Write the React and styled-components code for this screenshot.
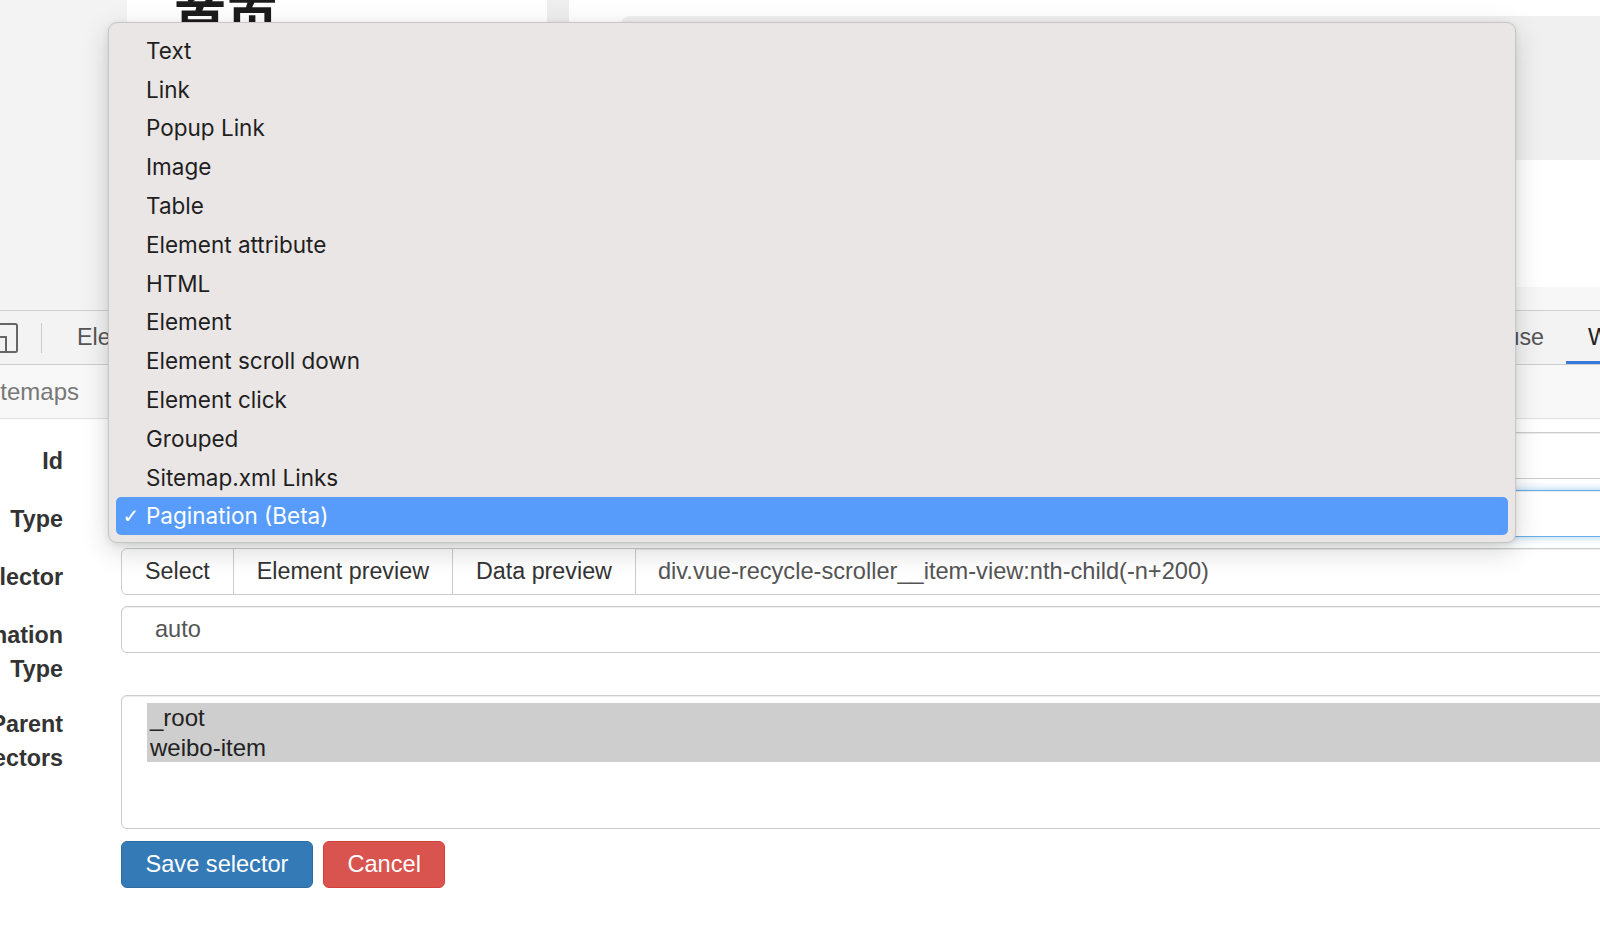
import React from 'react';
import styled, { createGlobalStyle } from 'styled-components';

const GlobalStyle = createGlobalStyle`
  html, body {
    margin: 0;
    padding: 0;
    width: 1600px;
    height: 937px;
    overflow: hidden;
    background: #fff;
  }
  body {
    font-family: "Liberation Sans", Arial, sans-serif;
    color: #333;
  }
  * { box-sizing: border-box; }
`;

const Screen = styled.div`
  position: relative;
  width: 1600px;
  height: 937px;
  overflow: hidden;
`;

/* ---- web page behind devtools ---- */
const Site = styled.div`
  display: flex;
  height: 310px;
  background: #f3f3f3;
`;

const SideGutter = styled.div`
  width: 127px;
  flex-shrink: 0;
`;

const FeedColumn = styled.div`
  width: 420px;
  flex-shrink: 0;
  background: #fff;
  overflow: hidden;
`;

const PageTitle = styled.h1`
  margin: -9px 0 0 47px;
  font: 700 52px/1 "Noto Sans CJK SC", sans-serif;
  color: #1c1c1c;
`;

const ColumnGap = styled.div`
  width: 22px;
  flex-shrink: 0;
  background: #eeeeee;
`;

const MainColumn = styled.div`
  flex: 1;
  display: flex;
  flex-direction: column;
  padding-top: 16px;
  background: #fff;
`;

const SearchCard = styled.div`
  margin-left: 51px;
  height: 144px;
  background: #f0f0f0;
  border-radius: 10px 0 0 10px;
`;

const MainFooter = styled.div`
  margin-top: auto;
  height: 23px;
  background: #f7f7f7;
`;

/* ---- devtools ---- */
const DevTools = styled.div`
  border-top: 1px solid #d0d0d0;
`;

const TabBar = styled.div`
  display: flex;
  align-items: center;
  height: 54px;
  background: #f3f3f3;
  border-bottom: 1px solid #cdcdcd;
  font-size: 23.3px;
  color: #555;
  white-space: nowrap;
  overflow: hidden;
`;

const Separator = styled.div`
  width: 1px;
  height: 30px;
  margin: 0 13px 0 23px;
  background: #cacaca;
`;

const Tab = styled.div`
  position: relative;
  flex-shrink: 0;
  height: 100%;
  display: flex;
  align-items: center;
  padding: 3px ${p => (p.$clip ? 0 : 22)}px 0 22px;
  overflow: hidden;
  width: ${p => (p.$clip ? `${p.$clip}px` : 'auto')};
  color: ${p => (p.$active ? '#222' : '#555')};
  border-bottom: 3px solid ${p => (p.$active ? '#3879d9' : 'transparent')};
`;

const TabSpacer = styled.div`
  flex: 1;
`;

const Breadcrumb = styled.nav`
  display: flex;
  align-items: center;
  height: 54px;
  background: #f8f8f8;
  border-bottom: 1px solid #e1e1e1;
  font-size: 24px;
`;

const Crumb = styled.span`
  margin-left: -21px;
  color: #777;
`;

const Form = styled.form`
  width: 1800px;
  margin-left: -87px;
  padding-top: 13px;
  display: grid;
  grid-template-columns: 150px 1fr;
  column-gap: 58px;
  row-gap: 11px;
  align-items: start;
`;

const Label = styled.label`
  padding-top: 13px;
  margin-bottom: -2px;
  text-align: right;
  font-weight: 700;
  font-size: 23.3px;
  line-height: 33.5px;
  color: #333;
`;

const Field = styled.div`
  display: flex;
  align-items: center;
  height: 47px;
  padding: 0 ${p => (p.$select ? 33 : 22)}px;
  background: #fff;
  border: 1px solid ${p => (p.$focused ? '#66afe9' : '#ccc')};
  border-radius: 6px;
  box-shadow: inset 0 1px 1px rgba(0, 0, 0, 0.075)
    ${p => (p.$focused ? ', 0 0 8px rgba(102, 175, 233, 0.6)' : '')};
  font-size: 23.6px;
  color: #555;
  white-space: nowrap;
`;

const InputGroup = styled.div`
  display: flex;
  height: 47px;
`;

const GroupButton = styled.button`
  flex-shrink: 0;
  height: 47px;
  margin-right: -1px;
  padding: 0 23px;
  background: #fff;
  border: 1px solid #ccc;
  border-radius: ${p => (p.$first ? '6px 0 0 6px' : '0')};
  font: 400 23.3px "Liberation Sans", Arial, sans-serif;
  color: #333;
`;

const GroupInput = styled(Field)`
  flex: 1;
  border-radius: 0 6px 6px 0;
`;

const MultiSelect = styled.div`
  height: 134px;
  padding: 7px 0 0 25px;
  border: 1px solid #ccc;
  border-radius: 6px;
  box-shadow: inset 0 1px 1px rgba(0, 0, 0, 0.075);
`;

const Option = styled.div`
  height: 29.5px;
  padding-left: 3px;
  background: #cecece;
  font-size: 24px;
  line-height: 29.5px;
  color: #222;
`;

const Actions = styled.div`
  grid-column: 2;
  display: flex;
  gap: 10px;
  margin-top: 1px;
`;

const ActionButton = styled.button`
  height: 47px;
  padding: 0 23.5px;
  border: 1px solid ${p => (p.$danger ? '#d43f3a' : '#2e6da4')};
  border-radius: 6px;
  background: ${p => (p.$danger ? '#d9534f' : '#337ab7')};
  color: #fff;
  font: 400 23.6px "Liberation Sans", Arial, sans-serif;
`;

/* ---- native select popup ---- */
const Menu = styled.ul`
  position: absolute;
  left: 108px;
  top: 22px;
  width: 1408px;
  margin: 0;
  padding: 8px 7px 7px;
  list-style: none;
  background: #e9e6e5;
  border: 1px solid #c8c6c5;
  border-radius: 9px;
  box-shadow: 0 8px 28px rgba(0, 0, 0, 0.16), 0 2px 6px rgba(0, 0, 0, 0.08);
`;

const MenuItem = styled.li`
  display: flex;
  align-items: center;
  height: 38.8px;
  border-radius: 5px;
  background: ${p => (p.$selected ? '#579cfa' : 'transparent')};
  color: ${p => (p.$selected ? '#fff' : '#1f1f1f')};
  font: 400 22.5px Inter, "Liberation Sans", sans-serif;
`;

const CheckSlot = styled.span`
  width: 30px;
  text-align: center;
  font: 400 20px "DejaVu Sans", sans-serif;
`;

const typeOptions = [
  'Text', 'Link', 'Popup Link', 'Image', 'Table', 'Element attribute', 'HTML',
  'Element', 'Element scroll down', 'Element click', 'Grouped', 'Sitemap.xml Links',
  'Pagination (Beta)',
];

const middleTabs = ['Console', 'Sources', 'Network', 'Performance', 'Memory', 'Application', 'Security'];

function DockIcon() {
  return (
    <svg width="18" height="30" viewBox="0 0 18 30" style={{ flexShrink: 0 }}>
      <rect x="-10" y="1" width="27" height="28" rx="1.5" fill="none" stroke="#666" strokeWidth="2" />
      <path d="M0 14 H6 V28" fill="none" stroke="#666" strokeWidth="2" />
    </svg>
  );
}

export default function App() {
  const selected = 'Pagination (Beta)';
  return (
    <Screen>
      <GlobalStyle />
      <Site>
        <SideGutter />
        <FeedColumn>
          <PageTitle>首页</PageTitle>
        </FeedColumn>
        <ColumnGap />
        <MainColumn>
          <SearchCard />
          <MainFooter />
        </MainColumn>
      </Site>

      <DevTools>
        <TabBar>
          <DockIcon />
          <Separator />
          <Tab>Elements</Tab>
          {middleTabs.map(t => <Tab key={t}>{t}</Tab>)}
          <TabSpacer />
          <Tab>Lighthouse</Tab>
          <Tab $active $clip={34}>Web Scraper</Tab>
        </TabBar>
        <Breadcrumb>
          <Crumb>Sitemaps</Crumb>
        </Breadcrumb>

        <Form>
          <Label>Id</Label>
          <Field>weibo-page</Field>

          <Label>Type</Label>
          <Field $select $focused>Pagination (Beta)</Field>

          <Label>Selector</Label>
          <InputGroup>
            <GroupButton type="button" $first>Select</GroupButton>
            <GroupButton type="button">Element preview</GroupButton>
            <GroupButton type="button">Data preview</GroupButton>
            <GroupInput>div.vue-recycle-scroller__item-view:nth-child(-n+200)</GroupInput>
          </InputGroup>

          <Label>Pagination Type</Label>
          <Field $select>auto</Field>

          <Label>Parent Selectors</Label>
          <MultiSelect>
            <Option>_root</Option>
            <Option>weibo-item</Option>
          </MultiSelect>

          <Actions>
            <ActionButton type="button">Save selector</ActionButton>
            <ActionButton type="button" $danger>Cancel</ActionButton>
          </Actions>
        </Form>
      </DevTools>

      <Menu>
        {typeOptions.map(opt => (
          <MenuItem key={opt} $selected={opt === selected}>
            <CheckSlot>{opt === selected ? '✓' : ''}</CheckSlot>
            {opt}
          </MenuItem>
        ))}
      </Menu>
    </Screen>
  );
}
